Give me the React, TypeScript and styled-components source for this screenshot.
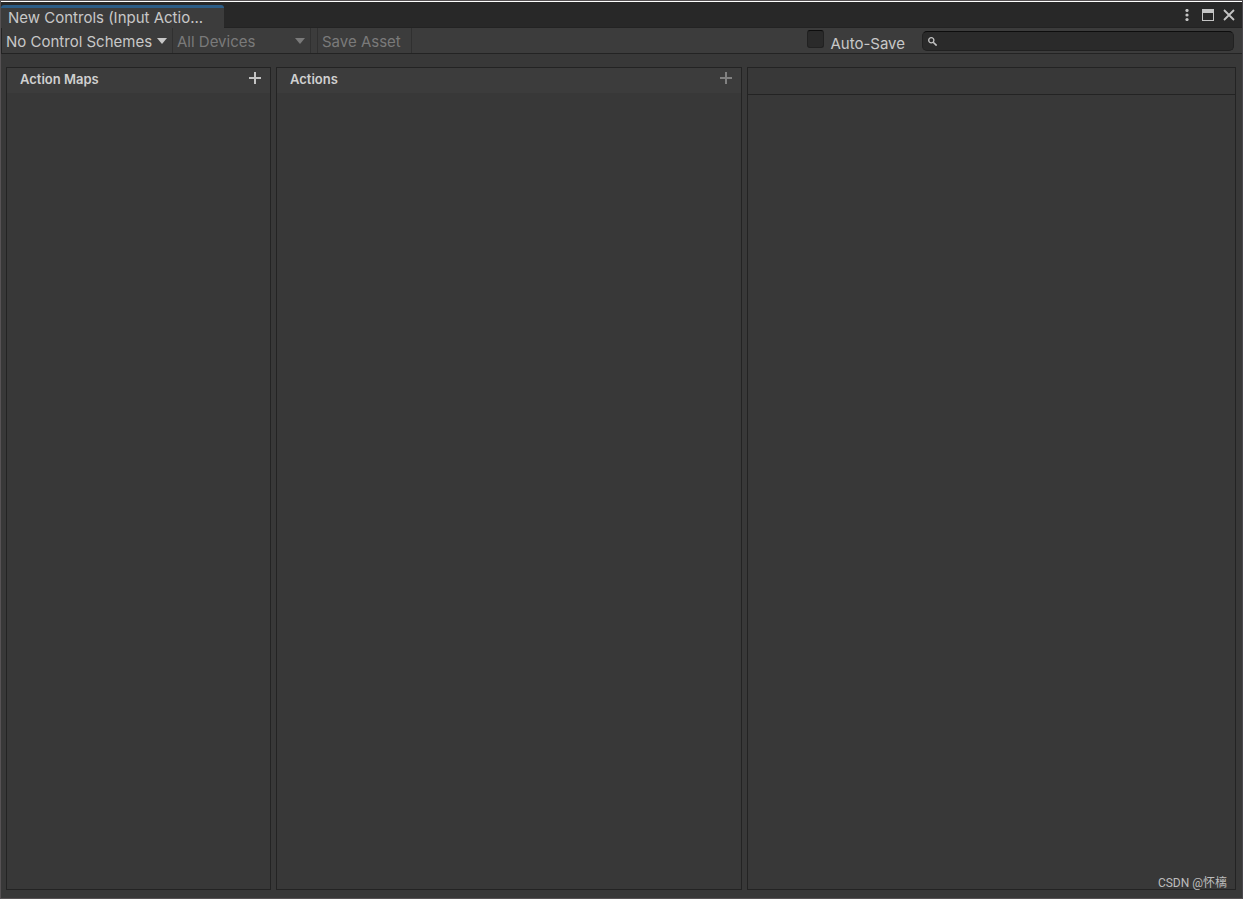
import React from "react";
import styled, { createGlobalStyle } from "styled-components";

const GlobalStyle = createGlobalStyle`
  *, *::before, *::after { box-sizing: border-box; }
  body {
    margin: 0;
    background: #383838;
    color: #c8c8c8;
    font-family: Inter, "Noto Sans CJK SC", sans-serif;
    font-size: 15px;
    line-height: 20px;
  }
  button, input, select { font: inherit; color: inherit; margin: 0; }
`;

const Window = styled.div`
  min-height: 100vh;
  display: flex;
  flex-direction: column;
  border: 1px solid #565254;
  border-right-color: #48464b;
`;

const TitleBar = styled.header`
  display: flex;
  align-items: flex-end;
  justify-content: space-between;
  height: 27px;
  background: #282828;
  border-top: 1px solid #ffffff;
  border-bottom: 1px solid #232323;
`;

const Tab = styled.button`
  width: 223px;
  height: 23px;
  margin-bottom: -1px;
  padding: 0 7px;
  border: 0;
  border-top: 3px solid #2c5d87;
  border-radius: 3px 3px 0 0;
  background: #3c3c3c;
  text-align: left;
  white-space: nowrap;
`;

const WindowButtons = styled.div`
  display: flex;
  align-items: center;
  align-self: flex-start;
  height: 26px;
  gap: 3px;
  padding-right: 4px;
`;

const IconButton = styled.button`
  display: grid;
  place-items: center;
  width: 18px;
  height: 18px;
  padding: 0;
  border: 0;
  background: none;
  color: #c4c4c4;
  &:disabled { color: #818181; }
`;

const Toolbar = styled.div`
  display: flex;
  align-items: stretch;
  height: 26px;
  background: #3c3c3c;
  border-bottom: 1px solid #232323;
  border-left: 1px solid #232323;
`;

const Dropdown = styled.div<{ $width: number }>`
  position: relative;
  display: flex;
  width: ${(p) => p.$width}px;
  border-right: 1px solid #303030;
  color: #c8c8c8;
  &:has(select:disabled) { color: #7a7a7a; }
  svg {
    position: absolute;
    right: 5px;
    top: 10px;
    pointer-events: none;
  }
`;

const Select = styled.select`
  appearance: none;
  width: 100%;
  padding: 2px 0 0 4px;
  border: 0;
  background: transparent;
  &:disabled { opacity: 1; }
`;

const SaveButton = styled.button`
  width: 95px;
  margin-left: 6px;
  padding: 2px 0 0 4px;
  text-align: left;
  border: 0;
  border-left: 1px solid #303030;
  border-right: 1px solid #303030;
  background: transparent;
  &:disabled { color: #7a7a7a; }
`;

const AutoSave = styled.label`
  display: flex;
  align-items: flex-start;
  gap: 6px;
  margin-left: auto;
  padding-top: 2px;
  span { padding-top: 4px; }
`;

const CheckBox = styled.input`
  appearance: none;
  width: 17px;
  height: 18px;
  border: 1px solid #212121;
  border-top-color: #0d0d0d;
  border-radius: 3px;
  background: #2a2a2a;
`;

const SearchBox = styled.div`
  display: flex;
  align-items: center;
  width: 312px;
  height: 20px;
  margin: 3px 8px 0 17px;
  padding: 0 5px;
  gap: 4px;
  border: 1px solid #212121;
  border-top-color: #0d0d0d;
  border-radius: 5px;
  background: #2a2a2a;
  input {
    flex: 1;
    min-width: 0;
    height: 16px;
    padding: 0;
    border: 0;
    outline: 0;
    background: transparent;
  }
`;

const Panels = styled.main`
  flex: 1;
  display: grid;
  grid-template-columns: 265px 466fr 489fr;
  gap: 5px;
  padding: 13px 6px 8px 5px;
`;

const Panel = styled.section`
  border: 1px solid #232323;
`;

const PanelHeader = styled.div<{ $lined?: boolean }>`
  display: flex;
  align-items: flex-start;
  justify-content: space-between;
  height: ${(p) => (p.$lined ? 27 : 25)}px;
  padding: 1px 6px 0 13px;
  background: ${(p) => (p.$lined ? "#383838" : "#3c3c3c")};
  border-bottom: ${(p) => (p.$lined ? "1px solid #232323" : "0")};
`;

const PanelTitle = styled.h2`
  margin: 0;
  font-size: 13px;
  font-weight: 600;
  line-height: 20px;
  color: #d0d0d0;
`;

const Watermark = styled.small`
  position: absolute;
  right: 16px;
  bottom: 8px;
  font: 12px/16px Roboto, "Noto Sans CJK SC", sans-serif;
  color: #bdbdbd;
`;

const Root = styled.div`
  position: relative;
`;

const Caret = () => (
  <svg width="10" height="6" viewBox="0 0 10 6" aria-hidden="true">
    <path d="M0 0H10L5 6Z" fill="currentColor" />
  </svg>
);

const Plus = () => (
  <svg width="12" height="12" viewBox="0 0 12 12" aria-hidden="true">
    <path d="M5 0H7V5H12V7H7V12H5V7H0V5H5Z" fill="currentColor" />
  </svg>
);

export default function App() {
  return (
    <Root>
      <GlobalStyle />
      <Window>
        <TitleBar>
          <Tab>New Controls (Input Actio...</Tab>
          <WindowButtons>
            <IconButton aria-label="Menu">
              <svg width="4" height="12" viewBox="0 0 4 12" fill="currentColor">
                <circle cx="2" cy="1.5" r="1.6" />
                <circle cx="2" cy="6" r="1.6" />
                <circle cx="2" cy="10.5" r="1.6" />
              </svg>
            </IconButton>
            <IconButton aria-label="Maximize">
              <svg width="12" height="12" viewBox="0 0 12 12" fill="currentColor">
                <path fillRule="evenodd" d="M0 0H12V12H0ZM1 4V11H11V4Z" />
              </svg>
            </IconButton>
            <IconButton aria-label="Close">
              <svg width="12" height="12" viewBox="0 0 12 12">
                <path d="M1 1L11 11M11 1L1 11" stroke="currentColor" strokeWidth="1.8" />
              </svg>
            </IconButton>
          </WindowButtons>
        </TitleBar>
        <Toolbar>
          <Dropdown $width={171}>
            <Select aria-label="Control scheme">
              <option>No Control Schemes</option>
            </Select>
            <Caret />
          </Dropdown>
          <Dropdown $width={138}>
            <Select aria-label="Devices" disabled>
              <option>All Devices</option>
            </Select>
            <Caret />
          </Dropdown>
          <SaveButton disabled>Save Asset</SaveButton>
          <AutoSave>
            <CheckBox type="checkbox" />
            <span>Auto-Save</span>
          </AutoSave>
          <SearchBox>
            <svg width="9" height="9" viewBox="0 0 9 9" fill="none" stroke="#c4c4c4" aria-hidden="true">
              <circle cx="3.3" cy="3.3" r="2.6" strokeWidth="1.3" />
              <path d="M5.2 5.2L8.6 8.6" strokeWidth="1.6" />
            </svg>
            <input type="text" aria-label="Search" />
          </SearchBox>
        </Toolbar>
        <Panels>
          <Panel>
            <PanelHeader>
              <PanelTitle>Action Maps</PanelTitle>
              <IconButton aria-label="Add action map"><Plus /></IconButton>
            </PanelHeader>
          </Panel>
          <Panel>
            <PanelHeader>
              <PanelTitle>Actions</PanelTitle>
              <IconButton aria-label="Add action" disabled><Plus /></IconButton>
            </PanelHeader>
          </Panel>
          <Panel>
            <PanelHeader $lined />
          </Panel>
        </Panels>
      </Window>
      <Watermark>CSDN @怀樆</Watermark>
    </Root>
  );
}
